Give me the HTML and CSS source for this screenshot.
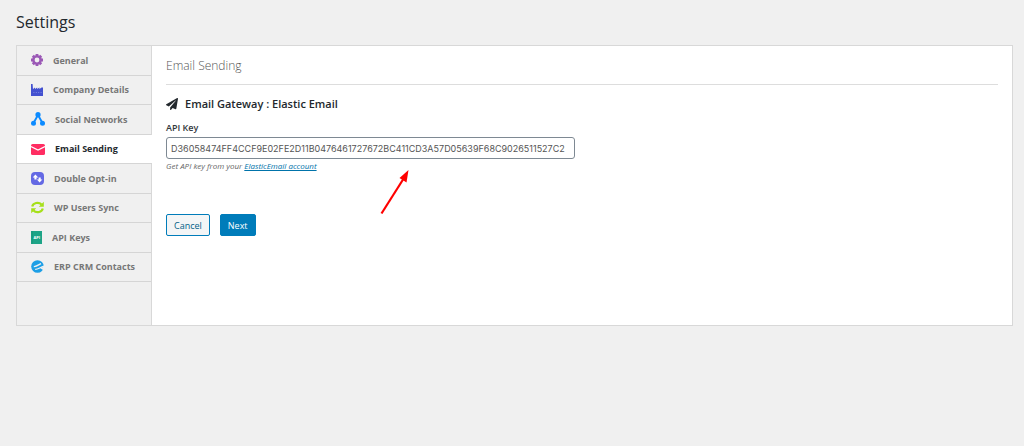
FILE: index.html
```html
<!DOCTYPE html>
<html lang="en">
<head>
    <meta charset="UTF-8">
    <meta name="viewport" content="width=device-width, initial-scale=1.0">
    <title>Settings</title>
    <link rel="stylesheet" href="styles.css">
</head>
<body>
    <h1>Settings</h1>

    <div class="settings">
        <nav class="settings-nav">
            <ul>
                <li><a href="#general">
                    <svg width="12" height="12" viewBox="0 0 12 12"><g stroke="#9b59b6" stroke-width="2.8"><path d="M6 0v12M0 6h12M1.8 1.8l8.4 8.4M10.2 1.8l-8.4 8.4"/></g><circle cx="6" cy="6" r="3.6" fill="#f0f0f0" stroke="#9b59b6" stroke-width="2.4"/></svg>
                    <span>General</span>
                </a></li>
                <li><a href="#company">
                    <svg width="12" height="12" viewBox="0 0 12 12" fill="#4351d0"><path d="M0 0h1.6l.4 5 2-1.600V5l2.200-1.600V5l2.200-1.600V5l2.200-1.600H12V12H0z"/><path d="M2.400 8h1v1h-1zM4.800 8h1v1h-1zM7.200 8h1v1h-1zM9.600 8h1v1h-1z" fill="#7d87e0"/></svg>
                    <span>Company Details</span>
                </a></li>
                <li><a href="#social">
                    <svg width="14" height="14" viewBox="0 0 14 14"><path d="M2.4 11.3L7 3l4.6 8.3" fill="none" stroke="#0d8bff" stroke-width="1.9"/><g fill="#0d8bff"><circle cx="7" cy="2.7" r="2.6"/><circle cx="2.5" cy="11.3" r="2.5"/><circle cx="11.5" cy="11.3" r="2.5"/></g></svg>
                    <span>Social Networks</span>
                </a></li>
                <li class="active"><a href="#email">
                    <svg width="14" height="12" viewBox="0 0 14 12"><rect y="1" width="14" height="11" rx="1.6" fill="#ff2d62"/><path d="M0 3.5l7 3.500 7-3.500" fill="none" stroke="#fff" stroke-width="1.2"/></svg>
                    <span>Email Sending</span>
                </a></li>
                <li><a href="#optin">
                    <svg width="13" height="13" viewBox="0 0 13 13"><rect width="13" height="13" rx="4" fill="#6469e4"/><path d="M4.4 2.5L7.2 5.6H5.5v2H3.4v-2H1.7zM8.6 10.6L5.9 7.6h1.7v-2h2.1v2h1.7z" fill="#fff"/></svg>
                    <span>Double Opt-in</span>
                </a></li>
                <li><a href="#sync">
                    <svg width="13" height="13" viewBox="0 0 13 13"><g fill="none" stroke="#a6e01a" stroke-width="2.2"><path d="M1.2 5.6C2 2 7.5.3 10.5 3.6M11.8 7.4C11 11 5.5 12.7 2.5 9.4"/></g><path d="M12.8.8v5H7.800zM.2 12.200v-5h5z" fill="#a6e01a"/></svg>
                    <span>WP Users Sync</span>
                </a></li>
                <li><a href="#api">
                    <svg width="11" height="13" viewBox="0 0 11 13"><rect width="11" height="13" fill="#1da487"/><path d="M1.2 0v13" stroke="#178d74" stroke-width=".6"/><text x="2.4" y="7.8" class="icon-text">API</text></svg>
                    <span>API Keys</span>
                </a></li>
                <li><a href="#contacts">
                    <svg width="13" height="13" viewBox="0 0 13 13"><circle cx="6.5" cy="6.5" r="6.3" fill="#1d9fe6"/><path d="M2.8 6.6C5 6.8 7.5 5 10 3.6M4.2 9.4C7 9.6 9 7.3 13 6.2" fill="none" stroke="#f0f0f0" stroke-width="1.3"/><path d="M9.500 8.500L13 6.500v4z" fill="#f0f0f0"/></svg>
                    <span>ERP CRM Contacts</span>
                </a></li>
            </ul>
        </nav>

        <main class="settings-content">
            <h2>Email Sending</h2>

            <form>
                <h3>
                    <svg width="12" height="12" viewBox="0 0 512 512" fill="#23282d"><path d="M476 3.2L12.5 270.6c-18.1 10.4-15.8 35.6 2.2 43.2L121 358.4l287.3-253.2c5.5-4.9 13.3 2.6 8.6 8.3L176 407v80.5c0 23.6 28.5 32.9 42.5 15.8L282 426l124.6 52.2c14.2 6 30.4-2.9 33-18.2l72-432C515 7.8 493.3-6.8 476 3.2z"/></svg>
                    <span>Email Gateway : Elastic Email</span>
                </h3>

                <div class="field">
                    <label for="api-key">API Key</label>
                    <input type="text" id="api-key" value="D36058474FF4CCF9E02FE2D11B0476461727672BC411CD3A57D05639F68C9026511527C2">
                    <p class="help">Get API key from your <a href="#account">ElasticEmail account</a></p>
                    <svg class="pointer" width="30" height="46" viewBox="0 0 30 46"><path d="M1.5 44.5L24 9" stroke="#f00" stroke-width="2.2"/><path d="M28.5 1L19.5 9l7 4.500z" fill="#f00"/></svg>
                </div>

                <div class="actions">
                    <button type="button" class="button">Cancel</button>
                    <button type="submit" class="button button-primary">Next</button>
                </div>
            </form>
        </main>
    </div>
</body>
</html>
```
FILE: styles.css
```css
* {
    box-sizing: border-box;
}

body {
    margin: 0;
    padding: 10px 11px 0 16px;
    background: #f0f0f0;
    color: #32373c;
    font-family: "Open Sans", "Noto Sans", sans-serif;
    font-size: 9px;
}

h1 {
    margin: 0 0 11px;
    font-size: 16px;
    line-height: 24px;
    font-weight: 400;
    color: #23282d;
}

.settings {
    display: flex;
    min-height: 281px;
    background: #fff;
    border: 1px solid #d8d8d8;
}

.settings-nav {
    flex: 0 0 135px;
    background: #f0f0f0;
    border-right: 1px solid #d8d8d8;
}

.settings-nav ul {
    display: flex;
    flex-direction: column;
    height: 236px;
    margin: 0;
    padding: 0;
    list-style: none;
}

.settings-nav li {
    flex: 1;
    border-bottom: 1px solid #d5d5d5;
}

.settings-nav a {
    display: flex;
    align-items: center;
    gap: 10px;
    height: 100%;
    padding-left: 14px;
    color: #777;
    font-weight: 700;
    text-decoration: none;
}

.settings-nav .active {
    margin-right: -1px;
    background: #fff;
}

.settings-nav .active a {
    color: #23282d;
}

.icon-text {
    font-size: 4px;
    font-weight: 700;
    fill: #fff;
}

.settings-content {
    flex: 1;
    min-width: 0;
    padding: 10px 14px 24px;
}

h2 {
    margin: 0 0 11px;
    padding-bottom: 8px;
    border-bottom: 1px solid #ddd;
    font-size: 12px;
    line-height: 20px;
    font-weight: 300;
    color: #555;
}

h3 {
    display: flex;
    align-items: center;
    gap: 7px;
    margin: 0 0 9px;
    font-size: 11px;
    line-height: 16px;
    font-weight: 600;
    color: #23282d;
}

.field {
    position: relative;
    margin-bottom: 42px;
}

label {
    display: block;
    margin-bottom: 2px;
    line-height: 14px;
    font-weight: 600;
}

input {
    display: block;
    width: 100%;
    max-width: 409px;
    height: 22px;
    padding: 0 4px;
    border: 1px solid #7e8993;
    border-radius: 3px;
    background: #fff;
    color: #555;
    font-family: Inter, "Open Sans", sans-serif;
    font-size: 9px;
}

.help {
    margin: 1px 0 0;
    font-size: 8px;
    line-height: 12px;
    font-style: italic;
    color: #666;
}

.help a {
    color: #0073aa;
}

/* red arrow over the form, points at the key */
.pointer {
    position: absolute;
    top: 48px;
    left: 214px;
}

.actions {
    display: flex;
    gap: 10px;
}

.button {
    height: 22px;
    padding: 0 7px;
    border: 1px solid #007cba;
    border-radius: 2px;
    background: #f3f5f6;
    color: #016087;
    font-family: inherit;
    font-size: 9px;
}

.button-primary {
    background: #007cba;
    color: #fff;
}
```
